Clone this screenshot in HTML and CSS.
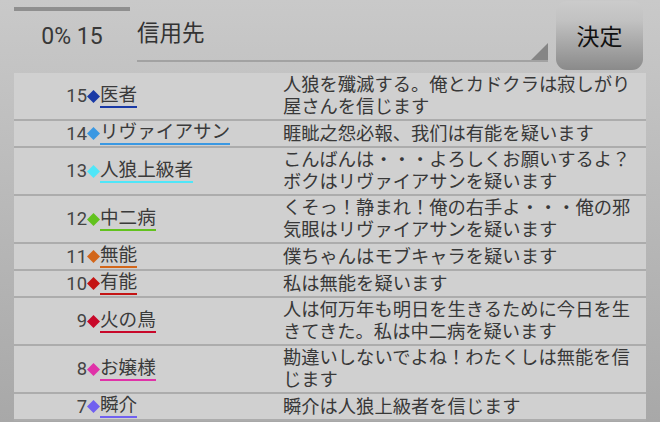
FILE: index.html
```html
<!DOCTYPE html>
<html lang="ja">
<head>
<meta charset="utf-8">
<link rel="stylesheet" href="styles.css">
</head>
<body>
<div class="header">
  <div class="progress">
    <div class="bar"></div>
    <div class="count">0% 15</div>
  </div>
  <div class="spinner">
    <span class="spin-text">信用先</span>
    <svg class="spin-arrow" width="17" height="17" viewBox="0 0 17 17"><polygon points="17,0 17,17 0,17" fill="#858585"/></svg>
  </div>
  <div class="btn">決定</div>
</div>
<div class="list">
  <div class="row">
    <div class="who"><span class="num">15</span><svg class="dia" viewBox="0 0 14 14"><polygon points="7,0 14,7 7,14 0,7" fill="#1a3aa6"/></svg><span class="name" style="border-color:#1a3aa6">医者</span></div>
    <div class="msg">人狼を殲滅する。俺とカドクラは寂しがり屋さんを信じます</div>
  </div>
  <div class="row">
    <div class="who"><span class="num">14</span><svg class="dia" viewBox="0 0 14 14"><polygon points="7,0 14,7 7,14 0,7" fill="#3a98e2"/></svg><span class="name" style="border-color:#3a98e2">リヴァイアサン</span></div>
    <div class="msg">睚眦之怨必報、我们は有能を疑います</div>
  </div>
  <div class="row">
    <div class="who"><span class="num">13</span><svg class="dia" viewBox="0 0 14 14"><polygon points="7,0 14,7 7,14 0,7" fill="#4fe6f8"/></svg><span class="name" style="border-color:#4fe6f8">人狼上級者</span></div>
    <div class="msg">こんばんは・・・よろしくお願いするよ？ボクはリヴァイアサンを疑います</div>
  </div>
  <div class="row">
    <div class="who"><span class="num">12</span><svg class="dia" viewBox="0 0 14 14"><polygon points="7,0 14,7 7,14 0,7" fill="#62c21e"/></svg><span class="name" style="border-color:#62c21e">中二病</span></div>
    <div class="msg">くそっ！静まれ！俺の右手よ・・・俺の邪気眼はリヴァイアサンを疑います</div>
  </div>
  <div class="row">
    <div class="who"><span class="num">11</span><svg class="dia" viewBox="0 0 14 14"><polygon points="7,0 14,7 7,14 0,7" fill="#d2661a"/></svg><span class="name" style="border-color:#d2661a">無能</span></div>
    <div class="msg">僕ちゃんはモブキャラを疑います</div>
  </div>
  <div class="row">
    <div class="who"><span class="num">10</span><svg class="dia" viewBox="0 0 14 14"><polygon points="7,0 14,7 7,14 0,7" fill="#c41414"/></svg><span class="name" style="border-color:#c41414">有能</span></div>
    <div class="msg">私は無能を疑います</div>
  </div>
  <div class="row">
    <div class="who"><span class="num">9</span><svg class="dia" viewBox="0 0 14 14"><polygon points="7,0 14,7 7,14 0,7" fill="#c8082a"/></svg><span class="name" style="border-color:#c8082a">火の鳥</span></div>
    <div class="msg">人は何万年も明日を生きるために今日を生きてきた。私は中二病を疑います</div>
  </div>
  <div class="row">
    <div class="who"><span class="num">8</span><svg class="dia" viewBox="0 0 14 14"><polygon points="7,0 14,7 7,14 0,7" fill="#e032a8"/></svg><span class="name" style="border-color:#e032a8">お嬢様</span></div>
    <div class="msg">勘違いしないでよね！わたくしは無能を信じます</div>
  </div>
  <div class="row">
    <div class="who"><span class="num">7</span><svg class="dia" viewBox="0 0 14 14"><polygon points="7,0 14,7 7,14 0,7" fill="#7060f0"/></svg><span class="name" style="border-color:#7060f0">瞬介</span></div>
    <div class="msg">瞬介は人狼上級者を信じます</div>
  </div>
</div>
</body>
</html>
```

FILE: styles.css
```css
html {
  height: 100%;
}
body {
  margin: 0;
  height: 100%;
  overflow: hidden;
  background: linear-gradient(#c9c9c9, #a8a8a8);
  font-family: Roboto, "Noto Sans CJK JP", sans-serif;
  color: #3a3a3a;
}
.header {
  display: flex;
  height: 73px;
}
.progress {
  width: 116px;
  margin-left: 14px;
}
.bar {
  margin-top: 7px;
  height: 4px;
  background: #8f8f8f;
}
.count {
  margin-top: 13px;
  text-align: center;
  font-size: 23px;
  line-height: 26px;
  color: #383838;
}
.spinner {
  position: relative;
  width: 411px;
  height: 60px;
  margin-left: 7px;
  border-bottom: 2px solid #a2a2a2;
}
.spin-text {
  display: block;
  margin-top: 20px;
  font-size: 22.5px;
  line-height: 26px;
  color: #333;
}
.spin-arrow {
  position: absolute;
  right: 0;
  bottom: 0;
  display: block;
}
.btn {
  width: 87px;
  height: 69px;
  margin-left: 8px;
  margin-top: 1px;
  border-radius: 11px;
  background: linear-gradient(#cbcbcb 0%, #c2c2c2 28%, #8a8a8a 100%);
  display: flex;
  align-items: center;
  justify-content: center;
  font-size: 23px;
  color: #111;
  padding-bottom: 2px;
  box-sizing: border-box;
}
.list {
  margin: 0 14px;
  background: #d0d0d0;
}
.row {
  display: flex;
  align-items: center;
  padding: 1px 0;
  border-bottom: 2px solid #acacac;
}
.who {
  width: 269px;
  flex: none;
  display: flex;
  align-items: center;
}
.num {
  width: 73px;
  text-align: right;
  font-size: 18.4px;
  line-height: 22px;
  color: #444;
}
.dia {
  width: 13px;
  height: 13px;
  display: block;
  flex: none;
}
.name {
  display: inline-block;
  font-size: 18.6px;
  line-height: 21px;
  border-bottom: 2px solid;
  color: #3a3a3a;
}
.msg {
  width: 358px;
  font-size: 18.3px;
  line-height: 22px;
  color: #383838;
}
```
